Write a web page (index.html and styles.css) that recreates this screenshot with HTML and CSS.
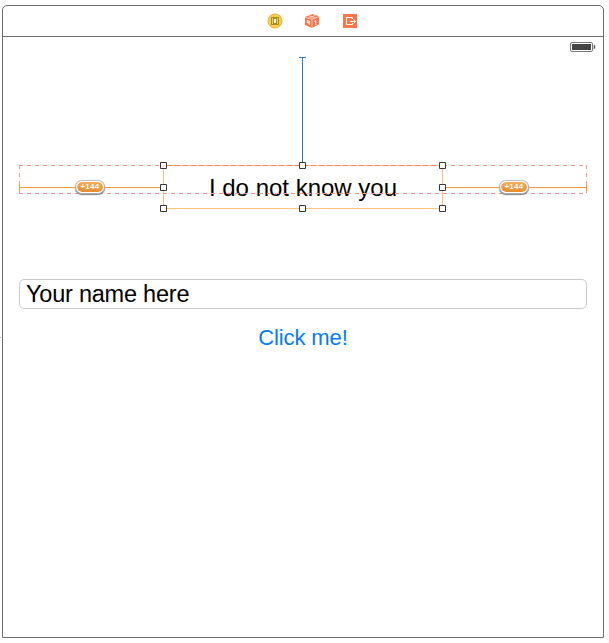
FILE: index.html
```html
<!DOCTYPE html>
<html lang="en">
<head>
<meta charset="utf-8">
<title>View controller</title>
<link rel="stylesheet" href="styles.css">
</head>
<body>
<span class="edge-mark"></span>
<main class="scene">
  <header class="dock">
    <svg class="icon" width="16" height="16" viewBox="0 0 16 16">
      <circle cx="8" cy="8" r="7" fill="#fbd13f" stroke="#e6ae40"/>
      <rect x="4.5" y="4.500" width="7" height="7" fill="#f5d651" stroke="#a88a35"/>
      <rect x="6.500" y="5.500" width="3" height="5" fill="#fff" stroke="#a8862f"/>
    </svg>
    <svg class="icon" width="16" height="16" viewBox="0 0 16 16">
      <path d="M1 4 8.500 1 15 3.300v8L8 15 1 12z" fill="#f5744b"/>
      <path d="M1 4.200 8 6.300 15 3.500M8 6.300V15M4.500 2.800l7 2M11.500 2.200 4.500 5.300" fill="none" stroke="#fff" stroke-width=".6"/>
      <path d="M3.200 7.500 5.200 8v3.800M3.200 7.500v2l2 .5M10.300 8.500l1.500-1v4.600" fill="none" stroke="#fff"/>
    </svg>
    <svg class="icon" width="16" height="16" viewBox="0 0 16 16">
      <path d="M1 1h14v14H1z" fill="#fa7548"/>
      <path d="M10.500 6V4.500h-6v7h6V10M8 8.500h5.500M11.500 6.500l2 2-2 2" fill="none" stroke="#fff"/>
    </svg>
  </header>
  <section class="canvas">
    <div class="status">
      <svg width="26" height="11" viewBox="0 0 26 11">
        <rect x=".5" y=".5" width="22" height="9" rx="1.5" fill="#fff" stroke="#777"/>
        <path d="M2 2h19v6H2z" fill="#454545"/>
        <path d="M24 3q1 0 1 2t-1 2z" fill="#555" stroke="#555" stroke-width=".5"/>
      </svg>
    </div>
    <div class="label">I do not know you</div>
    <div class="field">Your name here</div>
    <div class="button">Click me!</div>
    <svg class="guides" width="600" height="240" viewBox="3 37 600 240" fill="none">
      <g stroke="#ff9489" stroke-dasharray="4 4">
        <path d="M19 165.500h568M19 193.500h568M19.500 165v29M586.500 165v29"/>
      </g>
      <path d="M163.500 165.500h279v43h-279z" stroke="#fcc27e"/>
      <path d="M167 165.500h272" stroke="#ff7d60" stroke-dasharray="5 3"/>
      <path d="M19 187.500h144M443 187.500h144M19.500 184v7M586.500 184v7" stroke="#f7983a"/>
      <path d="M302.500 57v105M299 57.500h7" stroke="#2a78b8"/>
      <g fill="#fff" stroke="#363636">
        <path d="M160.500 162.500h6v6h-6zM299.500 162.500h6v6h-6zM439.500 162.500h6v6h-6zM160.500 184.500h6v6h-6zM439.500 184.500h6v6h-6zM160.500 205.500h6v6h-6zM299.500 205.500h6v6h-6zM439.500 205.500h6v6h-6z"/>
      </g>
    </svg>
    <span class="badge badge-left">+144</span>
    <span class="badge badge-right">+144</span>
  </section>
</main>
</body>
</html>
```
FILE: styles.css
```css
* { box-sizing: border-box; }
body {
  margin: 0;
  padding: 5px 0 0 2px;
  height: 643px;
  overflow: hidden;
  background: #fff;
  font-family: "Liberation Sans", Arial, sans-serif;
}
.edge-mark {
  position: absolute;
  left: 0;
  top: 337px;
  width: 1px;
  height: 1px;
  background: #bbb;
}
.scene {
  width: 602px;
  height: 633px;
  border: 1px solid #6d6d6d;
  border-radius: 5px 5px 0 0;
}
.dock {
  height: 31px;
  border-bottom: 1px solid #6d6d6d;
  display: flex;
  justify-content: center;
  align-items: center;
  gap: 21px;
  padding-left: 19px;
}
.icon { display: block; }
.icon:last-child { margin-left: 1px; }
.canvas {
  position: relative;
  display: flex;
  flex-direction: column;
  padding: 5px 16px 0;
}
.status {
  height: 11px;
  display: flex;
  justify-content: flex-end;
  margin-right: -9px;
}
.label {
  align-self: center;
  width: 280px;
  height: 44px;
  margin-top: 112px;
  line-height: 45px;
  font-size: 24px;
  text-align: center;
  white-space: nowrap;
}
.field {
  height: 30px;
  margin-top: 70px;
  padding-left: 6px;
  border: 1px solid #c9c9c9;
  border-radius: 5px;
  font-size: 23.5px;
  letter-spacing: -0.22px;
  line-height: 28px;
}
.button {
  margin-top: 16px;
  text-align: center;
  font-size: 22px;
  letter-spacing: -0.12px;
  line-height: 26px;
  color: #087bf5;
}
.guides { position: absolute; left: 0; top: 0; }
.badge {
  position: absolute;
  top: 144px;
  width: 28px;
  height: 12px;
  border: 1px solid #fff;
  border-radius: 6px;
  background: linear-gradient(#f5ad5b, #e68a2b) padding-box;
  box-shadow: 0 0 1px 1px #bbb, 0 1px 1px 1px #777;
  color: #fff;
  font-size: 8px;
  font-weight: bold;
  letter-spacing: 0.3px;
  line-height: 10px;
  text-align: center;
}
.badge-left { left: 73px; }
.badge-right { left: 497px; }
```
